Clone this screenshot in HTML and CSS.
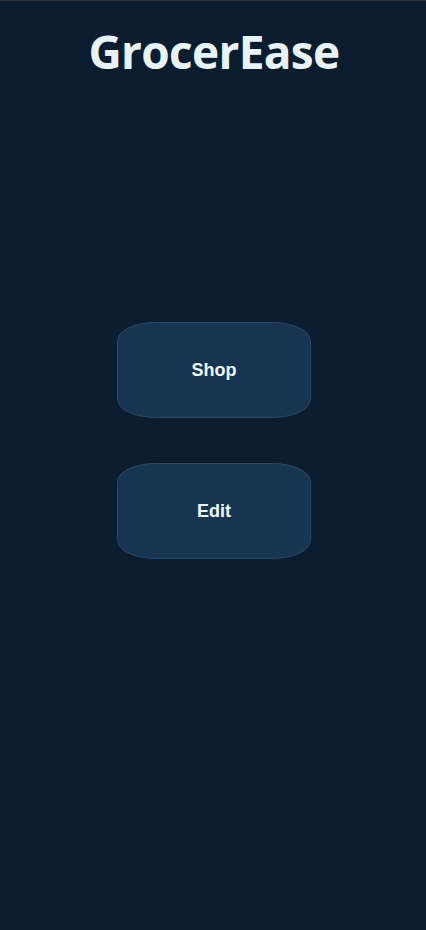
FILE: index.html
```html
<!DOCTYPE html>
<html>
<head>
<meta charset="utf-8">
<link rel="stylesheet" href="styles.css">
</head>
<body>
<header class="header">
  <h1 class="title">GrocerEase</h1>
</header>
<main class="menu">
  <button class="menu-btn">Shop</button>
  <button class="menu-btn">Edit</button>
</main>
</body>
</html>
```
FILE: styles.css
```css
html, body {
  margin: 0;
  padding: 0;
  background: #0b1d2e;
}
body {
  min-height: 929px;
  border-top: 1px solid #2a343e;
  font-family: "Liberation Sans", Arial, sans-serif;
}
.header {
  display: flex;
  justify-content: center;
  padding-top: 20px;
  padding-left: 2px;
}
.title {
  margin: 0;
  font-family: "Open Sans", sans-serif;
  font-weight: 700;
  font-size: 46px;
  line-height: 60px;
  color: #e8f3f5;
  letter-spacing: -0.7px;
}
.menu {
  display: flex;
  flex-direction: column;
  align-items: center;
  gap: 45px;
  padding-top: 241px;
  padding-left: 2px;
}
.menu-btn {
  width: 194px;
  height: 96px;
  background: #173450;
  border: 1px solid #284967;
  border-radius: 20%;
  color: #eef8fa;
  font-family: "Liberation Sans", Arial, sans-serif;
  font-weight: 700;
  font-size: 18px;
  padding: 0;
}
```
